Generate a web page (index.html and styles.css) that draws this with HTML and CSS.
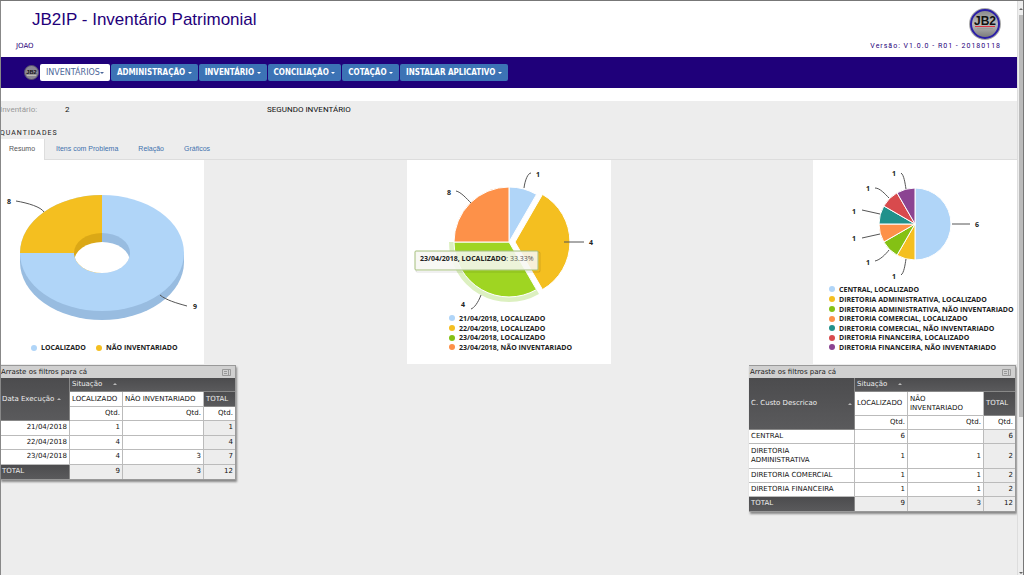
FILE: index.html
```html
<!DOCTYPE html>
<html lang="pt-BR">
<head>
<meta charset="utf-8">
<title>JB2IP - Inventário Patrimonial</title>
<link rel="stylesheet" href="styles.css">
</head>
<body>
<div class="page">
<header class="header">
  <div class="header-left">
    <h1 class="title">JB2IP - Inventário Patrimonial</h1>
    <div class="user">JOAO</div>
  </div>
  <div class="header-right">
    <svg class="logo" viewBox="0 0 32 32" role="img" aria-label="JB2">
      <defs><linearGradient id="metal" x1="0" y1="0" x2="0" y2="1"><stop offset="0" stop-color="#888"/><stop offset=".5" stop-color="#bbb"/><stop offset="1" stop-color="#777"/></linearGradient></defs>
      <circle cx="16" cy="16" r="16" fill="#aaa"/>
      <circle cx="16" cy="16" r="14" fill="url(#metal)" stroke="#2b1fa8" stroke-width="2"/>
      <text x="16" y="17" text-anchor="middle" class="logo-text">JB2</text>
      <rect x="6" y="18" width="20" height="1" fill="#d34"/>
      <rect x="8" y="20" width="16" height="1" fill="#999"/>
    </svg>
    <div class="version">Versão: V1.0.0 - R01 - 20180118</div>
  </div>
</header>
<nav class="nav">
  <svg class="nav-logo" viewBox="0 0 32 32" aria-hidden="true">
    <circle cx="16" cy="16" r="15" fill="#8b8794" stroke="#55506c" stroke-width="2"/>
    <text x="16" y="20" text-anchor="middle" class="logo-text">JB2</text>
    <rect x="6" y="21" width="20" height="2" fill="#ccb"/>
  </svg>
  <button class="menu menu-active">INVENTÁRIOS<span class="caret"></span></button>
  <button class="menu">ADMINISTRAÇÃO <span class="caret"></span></button>
  <button class="menu">INVENTÁRIO <span class="caret"></span></button>
  <button class="menu">CONCILIAÇÃO <span class="caret"></span></button>
  <button class="menu">COTAÇÃO <span class="caret"></span></button>
  <button class="menu">INSTALAR APLICATIVO <span class="caret"></span></button>
</nav>
<main class="content">
  <div class="info">
    <span class="info-label">Inventário:</span><span>2</span><span>SEGUNDO INVENTÁRIO</span>
  </div>
  <h2 class="section">QUANTIDADES</h2>
  <div class="tabs">
    <a class="tab tab-active" href="#resumo">Resumo</a>
    <a class="tab" href="#itens">Itens com Problema</a>
    <a class="tab" href="#relacao">Relação</a>
    <a class="tab" href="#graficos">Gráficos</a>
  </div>
  <div class="row">
    <svg class="chart" viewBox="0 0 204 204">
      <path d="M20 93V102A82 58 0 0 0 184 102V93Z" fill="#98bce0"/>
      <ellipse cx="102" cy="93" rx="82" ry="58" fill="#b0d5f8"/>
      <path d="M102 93V35A82 58 0 0 0 20 93Z" fill="#f4bf20"/>
      <clipPath id="hole"><ellipse cx="102" cy="93" rx="28" ry="20"/></clipPath>
      <g clip-path="url(#hole)">
        <rect x="74" y="73" width="28" height="40" fill="#dba816"/>
        <rect x="102" y="73" width="28" height="40" fill="#98bce0"/>
        <ellipse cx="102" cy="102" rx="28" ry="20" fill="#fff"/>
      </g>
      <path class="lead" d="M16 41C28 43 41 47 44 52M160 135C166 140 176 143 187 146"/>
      <g class="label"><text x="7" y="44">8</text><text x="193" y="149">9</text></g>
      <circle cx="34" cy="188" r="3" fill="#b0d5f8"/><circle cx="99" cy="188" r="3" fill="#f4bf20"/>
      <g class="legend"><text x="41" y="190">LOCALIZADO</text><text x="106" y="190">NÃO INVENTARIADO</text></g>
    </svg>
    <svg class="chart" viewBox="0 0 204 204">
      <path d="M102 82L132 134A60 60 0 0 1 42 82Z" fill="#dcf0c0"/>
      <g class="slices">
        <path d="M102 82V27A55 55 0 0 1 129.500 34.400Z" fill="#b0d5f8"/>
        <path d="M108 82L135.500 34.400A55 55 0 0 1 135.500 129.600Z" fill="#f4bf20"/>
        <path d="M102 82L129.500 129.600A55 55 0 0 1 47 82Z" fill="#9fd522"/>
        <path d="M102 82H47A55 55 0 0 1 102 27Z" fill="#fd9149"/>
      </g>
      <path class="lead" d="M117 28C118 20 121 13 124 13M157 82H177M74 135C71 143 67 148 64 149M49 31C54 32 60 39 64 43"/>
      <g class="label"><text x="129" y="17">1</text><text x="182" y="85">4</text><text x="54" y="147">4</text><text x="40" y="35">8</text></g>
      <circle cx="45" cy="158" r="3" fill="#b0d5f8"/><circle cx="45" cy="168" r="3" fill="#f4bf20"/><circle cx="45" cy="178" r="3" fill="#84c114"/><circle cx="45" cy="187" r="3" fill="#fd9149"/>
      <g class="legend">
        <text x="52" y="161">21/04/2018, LOCALIZADO</text><text x="52" y="171">22/04/2018, LOCALIZADO</text><text x="52" y="180">23/04/2018, LOCALIZADO</text><text x="52" y="190">23/04/2018, NÃO INVENTARIADO</text>
      </g>
      <rect x="9" y="92" width="124" height="20" rx="1" fill="none" stroke="#000" stroke-opacity=".12"/>
      <rect x="8" y="91" width="123" height="19" rx="1" fill="#f7f7f2" fill-opacity=".88" stroke="#a5bf7c"/>
      <text x="13" y="101" class="legend">23/04/2018, LOCALIZADO<tspan class="percent">: 33.33%</tspan></text>
    </svg>
    <svg class="chart" viewBox="0 0 204 204">
      <g class="slices">
        <path d="M102 64V28A36 36 0 0 1 102 100Z" fill="#b0d5f8"/>
        <path d="M102 64V100A36 36 0 0 1 84 95.200Z" fill="#f4bf20"/>
        <path d="M102 64L84 95.200A36 36 0 0 1 70.800 82Z" fill="#84c114"/>
        <path d="M102 64L70.800 82A36 36 0 0 1 66 64Z" fill="#fd9149"/>
        <path d="M102 64H66A36 36 0 0 1 70.800 46Z" fill="#20918b"/>
        <path d="M102 64L70.800 46A36 36 0 0 1 84 32.800Z" fill="#d84a4d"/>
        <path d="M102 64L84 32.800A36 36 0 0 1 102 28Z" fill="#8b4492"/>
      </g>
      <path class="lead" d="M139 64H157M88 13C91 15 92 23 93 29M62 28C67 28 72 34 76 38M49 50C55 51 61 53 67 54M49 78C55 77 61 75 67 74M62 101C67 100 73 94 76 90M88 115C91 113 92 105 93 99"/>
      <g class="label"><text x="162" y="67">6</text><text x="79" y="16">1</text><text x="53" y="31">1</text><text x="39" y="54">1</text><text x="39" y="81">1</text><text x="53" y="105">1</text><text x="79" y="119">1</text></g>
      <circle cx="19" cy="129" r="3" fill="#b0d5f8"/><circle cx="19" cy="139" r="3" fill="#f4bf20"/><circle cx="19" cy="149" r="3" fill="#84c114"/><circle cx="19" cy="159" r="3" fill="#fd9149"/><circle cx="19" cy="168" r="3" fill="#20918b"/><circle cx="19" cy="178" r="3" fill="#d84a4d"/><circle cx="19" cy="187" r="3" fill="#8b4492"/>
      <g class="legend">
        <text x="26" y="132">CENTRAL, LOCALIZADO</text><text x="26" y="142">DIRETORIA ADMINISTRATIVA, LOCALIZADO</text><text x="26" y="152">DIRETORIA ADMINISTRATIVA, NÃO INVENTARIADO</text><text x="26" y="161">DIRETORIA COMERCIAL, LOCALIZADO</text><text x="26" y="171">DIRETORIA COMERCIAL, NÃO INVENTARIADO</text><text x="26" y="180">DIRETORIA FINANCEIRA, LOCALIZADO</text><text x="26" y="190">DIRETORIA FINANCEIRA, NÃO INVENTARIADO</text>
      </g>
    </svg>
  </div>
  <div class="row tables">
    <section class="pivot">
      <div class="pivot-bar"><span>Arraste os filtros para cá</span><svg class="tool" viewBox="0 0 9 7"><path d="M.5.5h8v6h-8zM2 2.500h3M2 4.500h3M6.500 1v5" fill="none" stroke="#999"/></svg></div>
      <table class="grid grid-date">
        <colgroup><col class="c70"><col class="c53"><col class="c81"><col class="c31"></colgroup>
        <tr><th rowspan="3" class="dark">Data Execução <span class="sort"></span></th><th colspan="3" class="dark">Situação <span class="sort sort-gap"></span></th></tr>
        <tr><th>LOCALIZADO</th><th>NÃO INVENTARIADO</th><th class="dark">TOTAL</th></tr>
        <tr><td>Qtd.</td><td>Qtd.</td><td>Qtd.</td></tr>
        <tr><td>21/04/2018</td><td>1</td><td></td><td class="sum">1</td></tr>
        <tr><td>22/04/2018</td><td>4</td><td></td><td class="sum">4</td></tr>
        <tr><td>23/04/2018</td><td>4</td><td>3</td><td class="sum">7</td></tr>
        <tr><th class="dark">TOTAL</th><td class="sum">9</td><td class="sum">3</td><td class="sum">12</td></tr>
      </table>
    </section>
    <section class="pivot">
      <div class="pivot-bar"><span>Arraste os filtros para cá</span><svg class="tool" viewBox="0 0 9 7"><path d="M.5.5h8v6h-8zM2 2.500h3M2 4.500h3M6.500 1v5" fill="none" stroke="#999"/></svg></div>
      <table class="grid grid-cost">
        <colgroup><col class="c106"><col class="c53"><col class="c76"><col class="c31"></colgroup>
        <tr><th rowspan="3" class="dark"><span class="split">C. Custo Descricao <span class="sort"></span></span></th><th colspan="3" class="dark">Situação <span class="sort sort-gap"></span></th></tr>
        <tr class="double"><th>LOCALIZADO</th><th>NÃO<br>INVENTARIADO</th><th class="dark">TOTAL</th></tr>
        <tr><td>Qtd.</td><td>Qtd.</td><td>Qtd.</td></tr>
        <tr><th>CENTRAL</th><td>6</td><td></td><td class="sum">6</td></tr>
        <tr class="double"><th>DIRETORIA<br>ADMINISTRATIVA</th><td>1</td><td>1</td><td class="sum">2</td></tr>
        <tr><th>DIRETORIA COMERCIAL</th><td>1</td><td>1</td><td class="sum">2</td></tr>
        <tr><th>DIRETORIA FINANCEIRA</th><td>1</td><td>1</td><td class="sum">2</td></tr>
        <tr><th class="dark">TOTAL</th><td class="sum">9</td><td class="sum">3</td><td class="sum">12</td></tr>
      </table>
    </section>
  </div>
</main>
</div>
<div class="scrollbar"><span class="arrow"></span><div class="thumb"></div><span class="arrow arrow-down"></span></div>
</body>
</html>
```
FILE: styles.css
```css
* { box-sizing: border-box; }
body { position: relative; margin: 0; min-height: 100vh; display: flex; font-family: Roboto, "Liberation Sans", sans-serif; font-size: 8px; color: #222; background: #fff; border-top: 1px solid #777; }
body::before { content: ""; position: absolute; top: 0; bottom: 0; left: 0; width: 1px; background: #888; }
.page { flex: 1; min-width: 0; display: flex; flex-direction: column; }
.header { height: 56px; display: flex; justify-content: space-between; color: #1f007a; }
.title { margin: 9px 0 0 32px; font: 17px/20px "Liberation Sans", sans-serif; }
.user { margin: 10px 0 0 16px; font: 7px/12px "DejaVu Sans", sans-serif; }
.header-right { display: flex; flex-direction: column; align-items: flex-end; padding: 7px 16px 0 0; }
.logo { width: 32px; height: 32px; }
.logo-text { font: bold 12px "Liberation Sans", sans-serif; fill: #111; }
.version { font-size: 7px; line-height: 12px; letter-spacing: 1px; }
.nav { height: 31px; background: #1f007a; display: flex; align-items: center; padding-left: 24px; gap: 1px; }
.nav-logo { width: 15px; height: 15px; }
.menu { height: 17px; padding: 0 6px; border: 0; border-radius: 2px; background: #3c73b5; color: #fff; font: bold 8px/17px "DejaVu Sans Condensed", "DejaVu Sans", sans-serif; white-space: nowrap; }
.menu-active { background: #fff; color: #4b6699; font: 8px/17px "DejaVu Sans", sans-serif; }
.caret { display: inline-block; border: 2px solid transparent; border-top-color: currentColor; border-bottom: 0; vertical-align: middle; }
.content { flex: 1; margin-top: 13px; background: #ededed; }
.info { display: grid; grid-template-columns: 65px 202px 1fr; line-height: 18px; color: #111; }
.info-label { color: #999; }
.section { margin: 8px 0 0; font-size: 7px; line-height: 12px; font-weight: 400; letter-spacing: 1px; }
.tabs { display: flex; height: 21px; border-bottom: 1px solid #ddd; font-family: "Liberation Sans", sans-serif; font-size: 7px; }
.tab { padding: 0 9px; margin-right: 2px; line-height: 20px; color: #4272ad; text-decoration: none; }
.tab-active { height: 21px; background: #fff; color: #555; border-right: 1px solid #ddd; }
.row { display: flex; justify-content: space-between; align-items: flex-start; }
.chart { width: 204px; height: 204px; background: #fff; }
.slices path { stroke: #fff; stroke-width: 1px; }
.lead { fill: none; stroke: #555; stroke-width: 1px; }
.label, .legend { font: bold 7px "Open Sans", sans-serif; fill: #222; }
.legend .percent { font-weight: 400; fill: #555; }
.tables { padding: 1px 1px 0 0; font: 7px/9px "DejaVu Sans", sans-serif; }
.pivot { border: 1px solid #999; border-left: 0; box-shadow: 1px 2px 2px #888; background: #fff; }
.pivot-bar { height: 12px; display: flex; justify-content: space-between; align-items: center; padding: 0 4px 0 1px; background: #d0d0d0; }
.tool { width: 9px; height: 7px; }
.grid { border-spacing: 0; table-layout: fixed; color: #111; }
.grid-date { width: 235px; height: 101px; }
.grid-cost { width: 266px; height: 133px; }
.c70 { width: 70px; } .c53 { width: 53px; } .c81 { width: 81px; } .c31 { width: 31px; } .c106 { width: 106px; } .c76 { width: 76px; }
.grid th, .grid td { height: 14px; padding: 0 2px; border-right: 1px solid #bbb; border-bottom: 1px solid #bbb; text-align: right; font-weight: 400; white-space: nowrap; }
.grid th { text-align: left; }
.grid .double th, .grid .double td { height: 24px; }
.grid .dark { background: linear-gradient(#4c4c4e, #5a5a5c); color: #eee; border-color: #888; }
.grid .sum { background: #ededed; }
.grid tr > :last-child { border-right: 0; }
.grid tr:last-child > * { border-bottom: 0; }
.split { display: flex; justify-content: space-between; align-items: center; }
.sort { display: inline-block; border: 2px solid transparent; border-bottom-color: #bbb; border-top: 0; vertical-align: middle; }
.sort-gap { margin-left: 8px; }
.scrollbar { width: 7px; background: #eee; border-left: 1px solid #ddd; border-right: 1px solid #777; display: flex; flex-direction: column; align-items: center; padding: 7px 0 1px; }
.thumb { width: 4px; height: 71%; margin: 5px 0 auto; background: #bbb; }
.arrow { border: 2px solid transparent; border-bottom-color: #666; border-top: 0; }
.arrow-down { border-top: 2px solid #666; border-bottom: 0; }
```
